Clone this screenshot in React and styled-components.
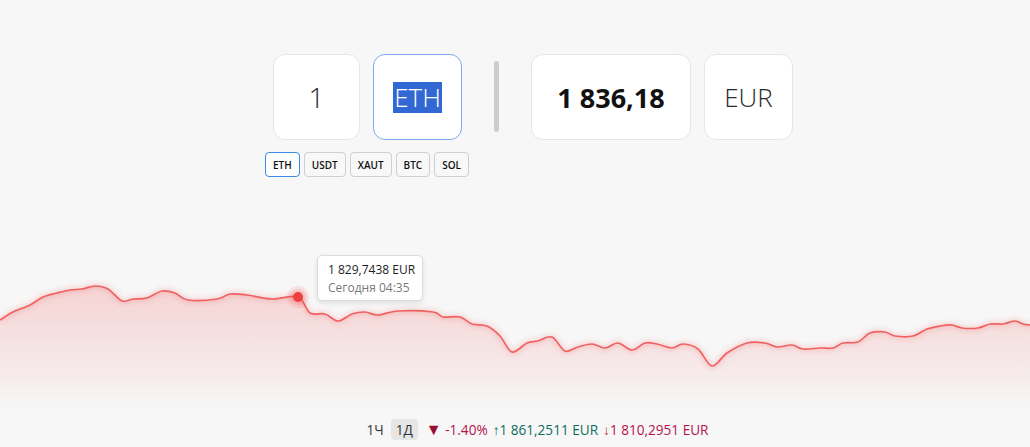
import React from 'react';
import styled, { createGlobalStyle } from 'styled-components';

const GlobalStyle = createGlobalStyle`
	html, body {
		margin: 0;
		padding: 0;
		background: #f7f7f7;
		font-family: "Open Sans", "Noto Sans", sans-serif;
	}
`;

const chips = ['ETH', 'USDT', 'XAUT', 'BTC', 'SOL'];

const points = [
	[0, 320], [13, 312], [30, 305], [43, 297], [57, 293], [70, 290], [82, 289],
	[95, 286], [108, 289], [122, 301], [133, 299], [147, 298], [162, 291],
	[175, 293], [188, 300], [217, 299], [230, 294], [247, 295], [272, 299],
	[298, 297], [310, 313], [325, 314], [338, 321], [352, 314], [365, 312],
	[378, 315], [398, 311], [433, 312], [443, 317], [460, 317], [472, 324],
	[487, 326], [500, 336], [512, 352], [527, 343], [538, 341], [552, 337],
	[565, 351], [578, 347], [592, 344], [605, 348], [618, 343], [632, 350],
	[645, 343], [657, 344], [672, 348], [683, 344], [698, 349], [712, 366],
	[727, 353], [747, 343], [765, 343], [777, 347], [792, 345], [803, 349],
	[820, 348], [833, 348], [843, 343], [858, 342], [870, 333], [885, 332],
	[895, 336], [913, 336], [927, 329], [940, 326], [952, 325], [962, 328],
	[978, 328], [990, 324], [1003, 324], [1015, 321], [1023, 324], [1030, 325],
];

// catmull-rom -> bezier so the line looks smooth
const smoothPath = (pts) => {
	let d = `M${pts[0][0]},${pts[0][1]}`;
	for (let i = 0; i < pts.length - 1; i++) {
		const p0 = pts[i - 1] || pts[i];
		const p1 = pts[i];
		const p2 = pts[i + 1];
		const p3 = pts[i + 2] || p2;
		const c1x = p1[0] + (p2[0] - p0[0]) / 6;
		const c1y = p1[1] + (p2[1] - p0[1]) / 6;
		const c2x = p2[0] - (p3[0] - p1[0]) / 6;
		const c2y = p2[1] - (p3[1] - p1[1]) / 6;
		d += ` C${c1x},${c1y} ${c2x},${c2y} ${p2[0]},${p2[1]}`;
	}
	return d;
};

const linePath = smoothPath(points);
const areaPath = `${linePath} L1030,410 L0,410 Z`;

const App = () => {
	return (
		<Page>
			<GlobalStyle />
			<Converter>
				<LeftGroup>
					<BoxRow>
						<ValueBox $width={87}>
							<LightText>1</LightText>
						</ValueBox>
						<ValueBox $width={89} $focused>
							<Selected>ETH</Selected>
						</ValueBox>
					</BoxRow>
					<ChipRow>
						{chips.map((c, i) => (
							<Chip key={c} $active={i === 0}>
								{c}
							</Chip>
						))}
					</ChipRow>
				</LeftGroup>
				<Divider />
				<BoxRow>
					<ValueBox $width={160}>
						<BoldText>1 836,18</BoldText>
					</ValueBox>
					<ValueBox $width={89}>
						<LightText $size={26}>EUR</LightText>
					</ValueBox>
				</BoxRow>
			</Converter>

			<ChartWrap>
				<svg width="1030" height="140" viewBox="0 270 1030 140">
					<defs>
						<linearGradient id="area" x1="0" y1="0" x2="0" y2="1">
							<stop offset="0%" stopColor="#ef4444" stopOpacity="0.2" />
							<stop offset="70%" stopColor="#ef4444" stopOpacity="0.07" />
							<stop offset="100%" stopColor="#ef4444" stopOpacity="0" />
						</linearGradient>
						<filter id="glow" x="-5%" y="-50%" width="110%" height="200%">
							<feGaussianBlur stdDeviation="2.5" />
						</filter>
					</defs>
					<path d={areaPath} fill="url(#area)" />
					<path
						d={linePath}
						fill="none"
						stroke="#ef4444"
						strokeOpacity="0.2"
						strokeWidth="5"
						filter="url(#glow)"
					/>
					<path
						d={linePath}
						fill="none"
						stroke="#f06262"
						strokeWidth="1.7"
						strokeLinejoin="round"
					/>
					<circle cx="298" cy="297" r="11" fill="#ef4444" fillOpacity="0.12" />
					<circle cx="298" cy="297" r="8" fill="#ef4444" fillOpacity="0.15" />
					<circle cx="298" cy="297" r="5" fill="#ef4040" />
				</svg>
				<Tooltip>
					<TipValue>1 829,7438 EUR</TipValue>
					<TipTime>Сегодня 04:35</TipTime>
				</Tooltip>
			</ChartWrap>

			<Footer>
				<Period>1Ч</Period>
				<Period $active>1Д</Period>
				<Change>
					<Triangle>▼</Triangle> -1.40%
				</Change>
				<High>↑1 861,2511 EUR</High>
				<Low>↓1 810,2951 EUR</Low>
			</Footer>
		</Page>
	);
};

export default App;

const Page = styled.div`
	width: 1030px;
	height: 447px;
	overflow: hidden;
	background: #f7f7f7;
`;

const Converter = styled.div`
	display: flex;
	align-items: flex-start;
	padding: 54px 0 0 273px;
`;

const LeftGroup = styled.div`
	display: flex;
	flex-direction: column;
	align-items: center;
	gap: 12px;
`;

const BoxRow = styled.div`
	display: flex;
	gap: 13px;
`;

const ValueBox = styled.div`
	box-sizing: border-box;
	width: ${(p) => p.$width}px;
	height: 86px;
	background: #fff;
	border: 1px solid ${(p) => (p.$focused ? '#7fa9ee' : '#e6e6e6')};
	border-radius: 12px;
	display: flex;
	align-items: center;
	justify-content: center;
`;

const LightText = styled.span`
	font-size: ${(p) => p.$size || 28}px;
	font-weight: 300;
	color: #2a2a2a;
`;

const Selected = styled.span`
	font-size: 26px;
	font-weight: 300;
	line-height: 31px;
	color: #fff;
	background: #3268d4;
	padding: 0 1px;
`;

const BoldText = styled.span`
	font-size: 27px;
	font-weight: 700;
	color: #111;
`;

const ChipRow = styled.div`
	display: flex;
	gap: 4px;
	margin-left: -9px;
	margin-right: -8px;
`;

const Chip = styled.button`
	box-sizing: border-box;
	height: 25px;
	padding: 0 7px;
	font-family: "Open Sans", sans-serif;
	font-size: 10px;
	font-weight: 600;
	color: #111;
	background: ${(p) => (p.$active ? '#fff' : '#f8f8f8')};
	border: 1px solid ${(p) => (p.$active ? '#3d8be6' : '#cfcfcf')};
	border-radius: 4px;
`;

const Divider = styled.div`
	width: 5px;
	height: 71px;
	margin: 7px 32px 0 32px;
	border-radius: 3px;
	background: #cccccc;
`;

const ChartWrap = styled.div`
	position: relative;
	margin-top: 93px;
	height: 140px;
	svg {
		display: block;
	}
`;

const Tooltip = styled.div`
	position: absolute;
	left: 317px;
	top: -15px;
	box-sizing: border-box;
	width: 106px;
	height: 46px;
	padding: 5px 0 0 10px;
	background: #fff;
	border: 1px solid #dcdcdc;
	border-radius: 5px;
	box-shadow: 0 2px 5px rgba(0, 0, 0, 0.1);
`;

const TipValue = styled.div`
	font-size: 12px;
	font-weight: 500;
	color: #1e1e1e;
	line-height: 18px;
`;

const TipTime = styled.div`
	font-size: 12px;
	color: #7a7a7a;
	line-height: 18px;
`;

const Footer = styled.div`
	display: flex;
	align-items: center;
	justify-content: center;
	gap: 5px;
	margin-top: 8px;
	padding-left: 43px;
	font-size: 13.6px;
`;

const Period = styled.span`
	padding: ${(p) => (p.$active ? '1px 5px' : '1px 2px')};
	border-radius: 4px;
	color: #333;
	font-weight: 500;
	background: ${(p) => (p.$active ? '#e6e6e6' : 'transparent')};
`;

const Change = styled.span`
	color: #b5134b;
	margin-left: 3px;
`;

const Triangle = styled.span`
	color: #9b0d2e;
	font-size: 16px;
`;

const High = styled.span`
	color: #0b6e5c;
`;

const Low = styled.span`
	color: #b5134b;
`;
